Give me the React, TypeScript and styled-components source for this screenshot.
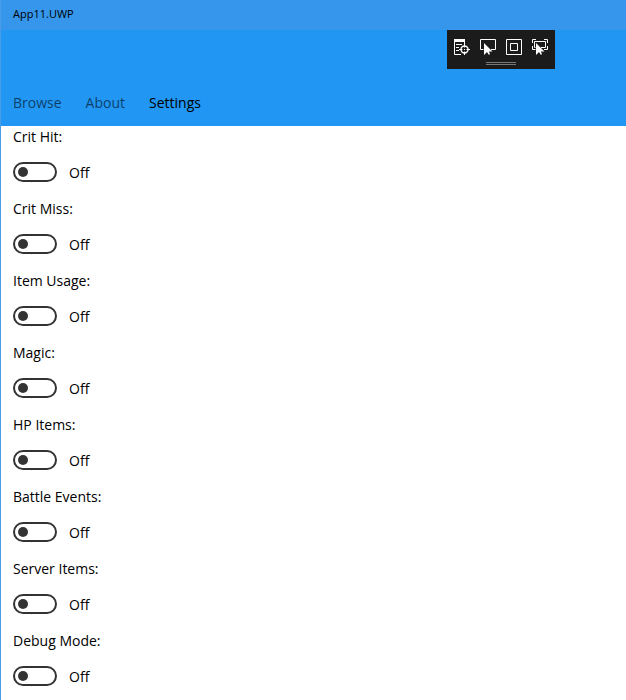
import React, { useState } from "react";
import styled, { createGlobalStyle } from "styled-components";

const GlobalStyle = createGlobalStyle`
  * { box-sizing: border-box; }
  body {
    margin: 0;
    overflow: hidden auto;
    scrollbar-width: none;
    background: #ffffff;
    color: #000000;
    font-family: "Open Sans", "Noto Sans", sans-serif;
    font-size: 14px;
    line-height: 20px;
  }
  button { font: inherit; }
`;

const Window = styled.div`
  min-height: 100vh;
  border-left: 1px solid #4a9ce8;
`;

const TitleBar = styled.header`
  height: 30px;
  padding: 4px 12px;
  background: #3596eb;
  font-size: 11px;
`;

const Header = styled.div`
  position: relative;
  display: flex;
  align-items: flex-end;
  height: 96px;
  padding: 0 12px 13px;
  background: #2196f3;
`;

const Tabs = styled.nav`
  display: flex;
  gap: 24px;
`;

const Tab = styled.button<{ $active: boolean }>`
  padding: 0;
  border: 0;
  background: none;
  color: ${(p) => (p.$active ? "#000000" : "rgba(0, 0, 0, 0.6)")};
`;

const DebugBar = styled.div`
  position: absolute;
  top: 0;
  right: 71px;
  display: flex;
  flex-direction: column;
  align-items: center;
  gap: 7px;
  width: 108px;
  height: 39px;
  padding-top: 9px;
  background: #1b1b1c;
`;

const DebugTools = styled.div`
  display: flex;
  gap: 10px;
`;

const ToolButton = styled.button`
  display: flex;
  width: 16px;
  height: 16px;
  padding: 0;
  border: 0;
  background: none;
`;

const Grip = styled.div`
  width: 30px;
  height: 3px;
  border-top: 1px solid #777777;
  border-bottom: 1px solid #777777;
`;

const SettingsList = styled.main`
  display: flex;
  flex-direction: column;
  gap: 16px;
  padding: 1px 12px 0;
`;

const Setting = styled.div`
  display: flex;
  flex-direction: column;
  gap: 15px;
  height: 56px;
`;

const Caption = styled.label`
  align-self: flex-start;
`;

const ToggleLine = styled.div`
  display: flex;
  align-items: flex-start;
  gap: 12px;
`;

const ToggleState = styled.span`
  line-height: 22px;
`;

const Toggle = styled.input`
  appearance: none;
  display: flex;
  align-items: center;
  width: 44px;
  height: 20px;
  margin: 0;
  padding: 0 3px;
  border: 2px solid #333333;
  border-radius: 10px;
  background: #ffffff;

  &::before {
    content: "";
    width: 10px;
    height: 10px;
    border-radius: 50%;
    background: #333333;
  }

  &:checked {
    justify-content: flex-end;
    border-color: #2196f3;
    background: #2196f3;
  }

  &:checked::before { background: #ffffff; }
`;

const Cursor = () => (
  <path d="M4 4V16L7 13L8.5 15.5H10L9 12.5H12.5Z" fill="#fff" stroke="#1b1b1c" strokeWidth="1" paintOrder="stroke" />
);

const Icon = ({ children }: { children: React.ReactNode }) => (
  <svg width="16" height="16" viewBox="0 0 16 16" fill="none" stroke="#fff" overflow="visible" aria-hidden="true">
    {children}
  </svg>
);

const tools = [
  {
    name: "Go to Live Visual Tree",
    drawing: (
      <>
        <path d="M0 0H11V3H0Z" fill="#fff" stroke="none" />
        <path d="M0.5 0V15.5H7M10.5 3V5M2 5.5H8M2 8.5H5M2 11.5H5" />
        <circle cx="10.5" cy="10.5" r="3.5" strokeWidth="1.4" />
        <path d="M10.5 5V8.5M10.5 12.5V16M5 10.5H8.5M12.5 10.5H16" />
        <path d="M10 10H11V11H10Z" fill="#fff" stroke="none" />
      </>
    ),
  },
  {
    name: "Enable selection",
    drawing: (
      <>
        <path d="M0.5 0.5H15.5V10.5H0.5Z" />
        <Cursor />
      </>
    ),
  },
  {
    name: "Display layout adorners",
    drawing: <path d="M0.5 0.5H15.5V15.5H0.5ZM4.5 4.5H11.5V11.5H4.5Z" />,
  },
  {
    name: "Track focused element",
    drawing: (
      <>
        <path d="M0.5 4V0.5H4M12 0.5H15.5V4M15.5 7V10.5H12M4 10.5H0.5V7M2.5 2.5H13.5V8.5H2.5Z" />
        <Cursor />
      </>
    ),
  },
];

const pages = ["Browse", "About", "Settings"];
const settings = [
  "Crit Hit:",
  "Crit Miss:",
  "Item Usage:",
  "Magic:",
  "HP Items:",
  "Battle Events:",
  "Server Items:",
  "Debug Mode:",
];

function SettingRow({ name, id }: { name: string; id: string }) {
  const [on, setOn] = useState(false);
  return (
    <Setting>
      <Caption htmlFor={id}>{name}</Caption>
      <ToggleLine>
        <Toggle id={id} type="checkbox" role="switch" checked={on} onChange={() => setOn(!on)} />
        <ToggleState>{on ? "On" : "Off"}</ToggleState>
      </ToggleLine>
    </Setting>
  );
}

export default function App() {
  const [page, setPage] = useState("Settings");
  return (
    <>
      <GlobalStyle />
      <Window>
        <TitleBar>App11.UWP</TitleBar>
        <Header>
          <Tabs>
            {pages.map((p) => (
              <Tab key={p} $active={p === page} onClick={() => setPage(p)}>
                {p}
              </Tab>
            ))}
          </Tabs>
          <DebugBar>
            <DebugTools>
              {tools.map((t) => (
                <ToolButton key={t.name} aria-label={t.name}>
                  <Icon>{t.drawing}</Icon>
                </ToolButton>
              ))}
            </DebugTools>
            <Grip />
          </DebugBar>
        </Header>
        <SettingsList>
          {settings.map((s, i) => (
            <SettingRow key={s} name={s} id={`setting-${i}`} />
          ))}
        </SettingsList>
      </Window>
    </>
  );
}
